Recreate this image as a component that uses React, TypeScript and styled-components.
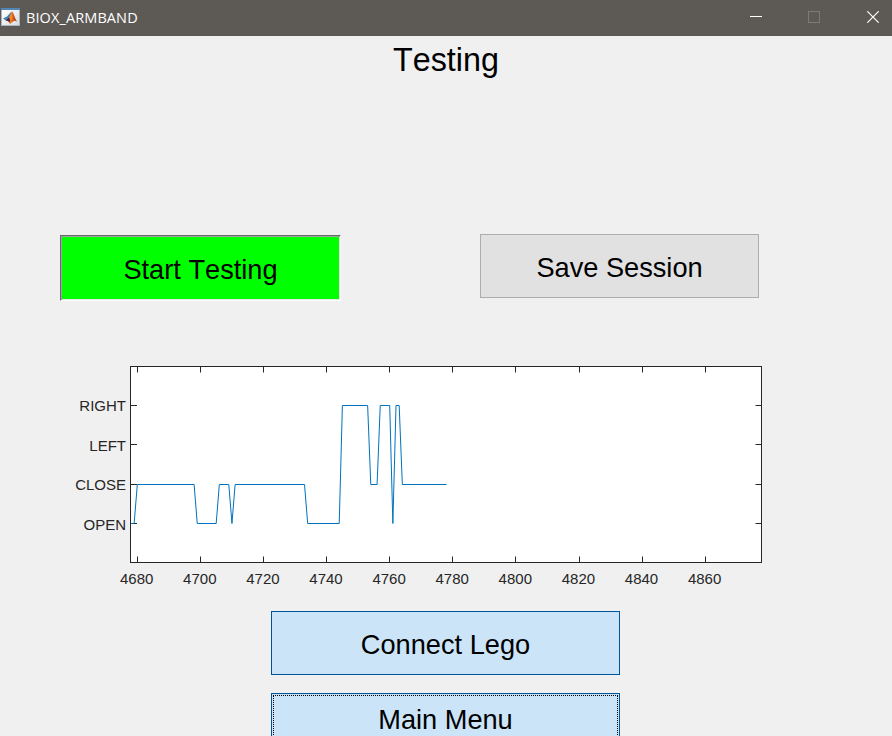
import React from "react";
import styled, { createGlobalStyle, css } from "styled-components";

const GlobalStyle = createGlobalStyle`
  *, *::before, *::after { box-sizing: border-box; }
  html, body { margin: 0; height: 100%; overflow: hidden; background: #f0f0f0; }
  body { font-family: "Liberation Sans", Arial, sans-serif; color: #000; }
`;

const Window = styled.div`
  display: flex;
  flex-direction: column;
  width: 892px;
  height: 736px;
  overflow: hidden;
  background: #f0f0f0;
  font-kerning: none;
`;

const TitleBar = styled.header`
  display: flex;
  flex: none;
  align-items: center;
  height: 36px;
  padding-left: 1px;
  background: #5d5955;
  color: #fff;
`;

const AppIcon = styled.svg`
  flex: none;
  width: 19px;
  height: 20px;
  margin-bottom: 2px;
`;

const AppName = styled.span`
  flex: 1;
  margin-left: 6px;
  padding-bottom: 1px;
  font-family: "Open Sans", "Segoe UI", sans-serif;
  font-size: 14.5px;
  line-height: 20px;
  letter-spacing: 0.1px;
`;

const WindowControl = styled.button<{ $disabled?: boolean }>`
  display: flex;
  align-items: center;
  justify-content: center;
  width: 58.5px;
  height: 36px;
  padding: 0 0 2px;
  border: 0;
  background: none;
  color: ${(p) => (p.$disabled ? "#7d7a77" : "#fff")};
`;

const Controls = styled.div`
  display: flex;
  margin-right: -10px;
`;

const Heading = styled.h1`
  margin: 6px 0 0;
  font-size: 32.3px;
  font-weight: 400;
  line-height: 36px;
  text-align: center;
`;

const Content = styled.main`
  display: flex;
  flex: 1;
  flex-direction: column;
  min-height: 0;
`;

const SessionActions = styled.div`
  display: flex;
  flex: none;
  align-items: flex-start;
  gap: 139px;
  height: 67px;
  margin-top: 156px;
  padding-left: 60px;
`;

const variants = {
  pressed: css`
    width: 281px;
    height: 66px;
    margin-top: 1px;
    padding-top: 3px;
    border: 1px solid;
    border-color: #696969 #fff #fff #696969;
    background: #00ff00;
    box-shadow: inset 1px 1px #a0a0a0, inset -1px -1px #e3e3e3;
  `,
  neutral: css`
    width: 279px;
    height: 64px;
    border: 1px solid #adadad;
    background: #e1e1e1;
  `,
  active: css`
    width: 349px;
    height: 64px;
    border: 1px solid #005499;
    background: #cce4f7;
  `,
};

const ActionButton = styled.button<{ $variant: keyof typeof variants; $focused?: boolean }>`
  flex: none;
  padding: 3px 0 0;
  font: 27.2px/32px "Liberation Sans", Arial, sans-serif;
  font-kerning: none;
  color: #000;
  text-align: center;
  ${(p) => variants[p.$variant]}
  ${(p) =>
    p.$focused &&
    css`
      height: 56px;
      padding: 0 0 2px;
      outline: 1px dotted #000;
      outline-offset: -3px;
    `}
`;

const MenuActions = styled.div`
  display: flex;
  flex-direction: column;
  gap: 18px;
  margin: 16px 0 0 271px;
`;

const Plot = styled.svg`
  display: block;
  flex: none;
  width: 892px;
  height: 250px;
  margin-top: 44px;
`;

const TickLabel = styled.text`
  font: 15px "Liberation Sans", Arial, sans-serif;
  font-kerning: none;
  fill: #262626;
`;

const AXES = { left: 130.5, right: 761.5, top: 21.5, bottom: 217.5 };
const X_TICKS = [4680, 4700, 4720, 4740, 4760, 4780, 4800, 4820, 4840, 4860];
const Y_TICKS = [
  { name: "RIGHT", y: 60.5, baseline: 66 },
  { name: "LEFT", y: 99.5, baseline: 106 },
  { name: "CLOSE", y: 139.5, baseline: 145 },
  { name: "OPEN", y: 178.5, baseline: 185 },
];
const OPEN = 178.5;
const CLOSE = 139.5;
const RIGHT = 60.5;
const SAMPLES: [number, number][] = [
  [4678, OPEN], [4679, OPEN], [4680, CLOSE], [4698, CLOSE], [4699, OPEN],
  [4705, OPEN], [4706, CLOSE], [4709, CLOSE], [4710, OPEN], [4711, CLOSE],
  [4733, CLOSE], [4734, OPEN], [4744, OPEN], [4745, RIGHT], [4753, RIGHT],
  [4754, CLOSE], [4756, CLOSE], [4757, RIGHT], [4760, RIGHT], [4761, OPEN],
  [4762, RIGHT], [4763, RIGHT], [4764, CLOSE], [4778, CLOSE],
];

const xOf = (v: number) => 131 + (v - 4678) * 3.155;
const snap = (v: number) => Math.floor(xOf(v)) + 0.5;

function GesturePlot() {
  const { left, right, top, bottom } = AXES;
  return (
    <Plot viewBox="0 0 892 250">
      <rect x={left} y={top} width={right - left} height={bottom - top} fill="#fff" stroke="#262626" />
      <g stroke="#262626">
        {X_TICKS.map((v) => (
          <path key={v} d={`M${snap(v)} ${top}v6M${snap(v)} ${bottom}v-6`} />
        ))}
        {Y_TICKS.map((t) => (
          <path key={t.name} d={`M${left} ${t.y}h6.5M${right} ${t.y}h-6`} />
        ))}
      </g>
      {X_TICKS.map((v) => (
        <TickLabel key={v} x={xOf(v) - 0.6} y="239" textAnchor="middle">{v}</TickLabel>
      ))}
      {Y_TICKS.map((t) => (
        <TickLabel key={t.name} x="126" y={t.baseline} textAnchor="end">{t.name}</TickLabel>
      ))}
      <polyline
        points={SAMPLES.map(([v, y]) => `${xOf(v)},${y}`).join(" ")}
        fill="none"
        stroke="#0072bd"
        strokeLinejoin="bevel"
      />
    </Plot>
  );
}

function MatlabIcon() {
  return (
    <AppIcon viewBox="0 0 19 20">
      <defs>
        <linearGradient id="paper" x2="1" y2="1">
          <stop stopColor="#fff" />
          <stop offset="1" stopColor="#d8dce0" />
        </linearGradient>
        <linearGradient id="peak">
          <stop stopColor="#8c1d10" />
          <stop offset=".45" stopColor="#ef7a24" />
          <stop offset="1" stopColor="#a92713" />
        </linearGradient>
      </defs>
      <rect x="0" y="1" width="19" height="18" fill="#a9b4bf" />
      <rect x="0" y="1" width="19" height="2" fill="#4f86b5" />
      <rect x="1" y="3" width="17" height="15" fill="url(#paper)" />
      <path d="M2 11.500l4-2 4.500-5-1.500 6.500L5.500 14z" fill="#3e82b0" />
      <path d="M5 13.500l3-2.500 3-6.700c1.500 1 2.500 6.500 5 10.200-2-1-3-1-4.500 .5L9 17c-1-2-2-3.500-4-3.500z" fill="url(#peak)" />
      <path d="M8 11l3-6.500.3 6-1.800 4.500z" fill="#f08a2b" />
      <path d="M5 13.500l3-3 1.200 3-1 1.500c-1-1-2-1.500-3.200-1.500z" fill="#4b2735" />
    </AppIcon>
  );
}

export default function App() {
  return (
    <>
      <GlobalStyle />
      <Window>
        <TitleBar>
          <MatlabIcon />
          <AppName>BIOX_ARMBAND</AppName>
          <Controls>
            <WindowControl aria-label="Minimize">
              <svg width="12" height="12"><path d="M0 5.500h12" stroke="currentColor" /></svg>
            </WindowControl>
            <WindowControl aria-label="Maximize" $disabled>
              <svg width="12" height="12"><rect x=".5" y=".5" width="11" height="11" fill="none" stroke="currentColor" /></svg>
            </WindowControl>
            <WindowControl aria-label="Close">
              <svg width="12" height="12"><path d="M.3 .3l11.400 11.400M11.700 .3L.3 11.700" stroke="currentColor" strokeWidth="1.200" /></svg>
            </WindowControl>
          </Controls>
        </TitleBar>
        <Content>
          <Heading>Testing</Heading>
          <SessionActions>
            <ActionButton $variant="pressed">Start Testing</ActionButton>
            <ActionButton $variant="neutral">Save Session</ActionButton>
          </SessionActions>
          <GesturePlot />
          <MenuActions>
            <ActionButton $variant="active">Connect Lego</ActionButton>
            <ActionButton $variant="active" $focused>Main Menu</ActionButton>
          </MenuActions>
        </Content>
      </Window>
    </>
  );
}
